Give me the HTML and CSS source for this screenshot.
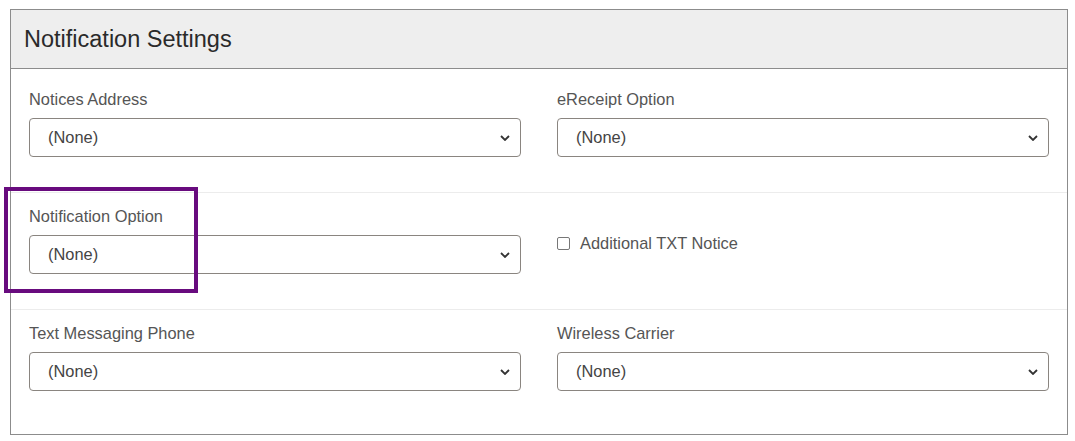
FILE: index.html
```html
<!DOCTYPE html>
<html>
<head>
<meta charset="utf-8">
<link rel="stylesheet" href="styles.css">
</head>
<body>
<div class="card">
  <div class="card-header">Notification Settings</div>
  <div class="card-body">
    <div class="row">
      <div class="field">
        <div class="label">Notices Address</div>
        <div class="select"><span>(None)</span><svg class="chev" viewBox="0 0 10 6" width="10" height="6"><path d="M1 1 L5 5 L9 1" fill="none" stroke="#333" stroke-width="1.8"/></svg></div>
      </div>
      <div class="field">
        <div class="label">eReceipt Option</div>
        <div class="select"><span>(None)</span><svg class="chev" viewBox="0 0 10 6" width="10" height="6"><path d="M1 1 L5 5 L9 1" fill="none" stroke="#333" stroke-width="1.8"/></svg></div>
      </div>
    </div>
    <div class="row">
      <div class="field">
        <div class="label">Notification Option</div>
        <div class="select"><span>(None)</span><svg class="chev" viewBox="0 0 10 6" width="10" height="6"><path d="M1 1 L5 5 L9 1" fill="none" stroke="#333" stroke-width="1.8"/></svg></div>
        <div class="highlight"></div>
      </div>
      <div class="field check-field">
        <label class="check"><span class="box"></span>Additional TXT Notice</label>
      </div>
    </div>
    <div class="row last">
      <div class="field">
        <div class="label">Text Messaging Phone</div>
        <div class="select"><span>(None)</span><svg class="chev" viewBox="0 0 10 6" width="10" height="6"><path d="M1 1 L5 5 L9 1" fill="none" stroke="#333" stroke-width="1.8"/></svg></div>
      </div>
      <div class="field">
        <div class="label">Wireless Carrier</div>
        <div class="select"><span>(None)</span><svg class="chev" viewBox="0 0 10 6" width="10" height="6"><path d="M1 1 L5 5 L9 1" fill="none" stroke="#333" stroke-width="1.8"/></svg></div>
      </div>
    </div>
  </div>
</div>
</body>
</html>
```
FILE: styles.css
```css
html, body {
  margin: 0;
  padding: 0;
  background: #fff;
}
body {
  padding: 9px 7px 0 10px;
  font-family: "Liberation Sans", Arial, sans-serif;
  color: #555;
}
.card {
  border: 1px solid #8c8c8c;
  width: 1056px;
  box-sizing: content-box;
}
.card-header {
  background: #eeeeee;
  height: 58px;
  border-bottom: 1px solid #8c8c8c;
  padding-left: 13px;
  font-size: 23.5px;
  line-height: 58px;
  color: #2a2a2a;
}
.card-body {
  padding: 7px 0 8px 0;
}
.row {
  display: grid;
  grid-template-columns: 1fr 1fr;
  column-gap: 36px;
  padding: 13px 18px 35px 18px;
  border-bottom: 1px solid #ececec;
}
.row.last {
  border-bottom: none;
}
.field {
  position: relative;
}
.label {
  font-size: 16.4px;
  line-height: 20px;
  color: #555;
  margin-bottom: 9px;
}
.select {
  height: 37px;
  border: 1px solid #8a8580;
  border-radius: 4px;
  display: flex;
  align-items: center;
  justify-content: space-between;
  padding: 0 10px 0 18px;
  font-size: 16.4px;
  color: #444;
}
.chev {
  display: block;
}
.check-field {
  padding-top: 27px;
}
.check {
  display: flex;
  align-items: center;
  font-size: 16.4px;
  line-height: 20px;
  color: #555;
}
.box {
  width: 11px;
  height: 11px;
  border: 1px solid #777;
  border-radius: 2px;
  margin-right: 10px;
  background: #fff;
}
.highlight {
  position: absolute;
  left: -25px;
  top: -19px;
  width: 186px;
  height: 98px;
  border: 4px solid #680b7e;
}
```
